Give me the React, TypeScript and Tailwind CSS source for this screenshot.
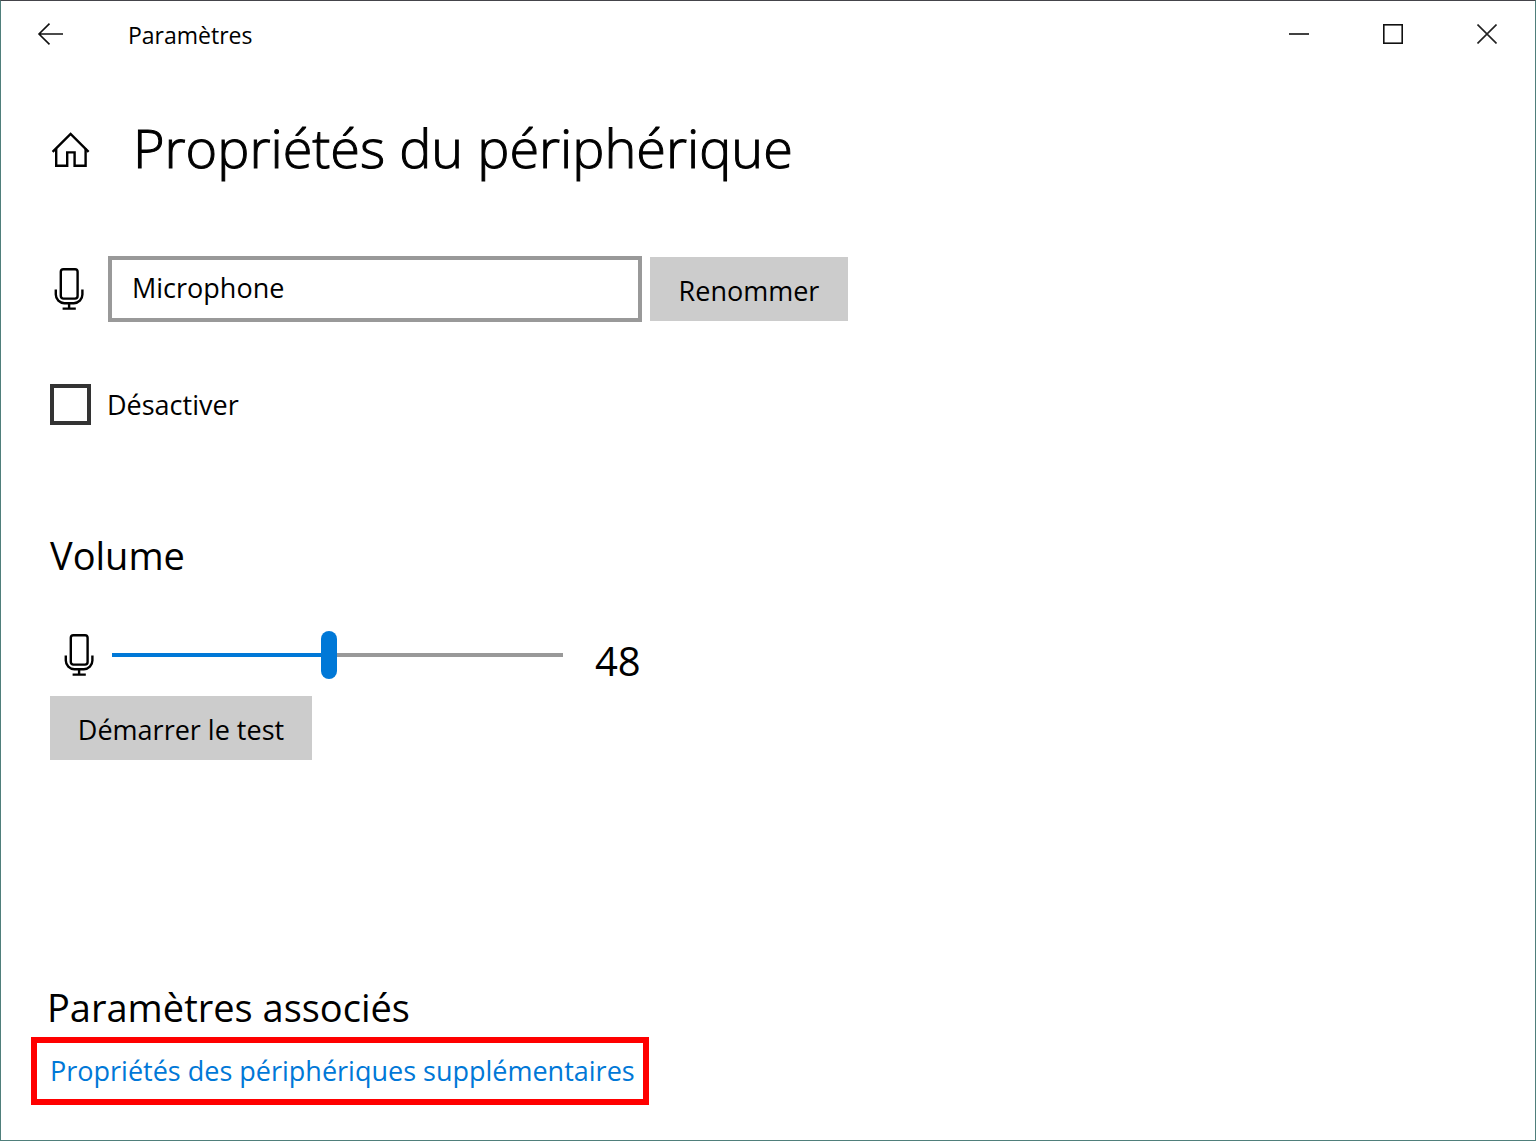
import { useState } from 'react'

const captionButton = 'flex h-[66px] w-[94px] items-center justify-center hover:bg-gray-200'

function MicIcon() {
  return (
    <svg width="30" height="44" viewBox="0 0 30 44" fill="none" stroke="#000" strokeWidth="2.4" aria-hidden="true">
      <rect x="6.8" y="2.2" width="16.8" height="29.4" rx="2.6" />
      <path d="M1.8 22.4v5.2a8.6 8.6 0 0 0 8.6 8.6h9.4a8.6 8.6 0 0 0 8.6-8.6v-5.2" />
      <path d="M15.1 36.2v5.4M8.6 41.6h13.2" />
    </svg>
  )
}

function TitleBar() {
  return (
    <header className="flex h-[66px] items-center">
      <button type="button" aria-label="Retour" className="flex h-full w-[98px] items-center justify-center">
        <svg width="26" height="22" viewBox="0 0 26 22" fill="none" stroke="#111" strokeWidth="1.6">
          <path d="M26 11H2M12.5 0.6L2 11L12.5 21.4" />
        </svg>
      </button>
      <span className="ml-[29px] pt-px text-[23px] leading-8">Paramètres</span>
      <div className="mr-px ml-auto flex">
        <button type="button" aria-label="Réduire" className={captionButton}>
          <svg width="20" height="20" viewBox="0 0 20 20" stroke="#111" strokeWidth="1.6">
            <path d="M0 10h20" />
          </svg>
        </button>
        <button type="button" aria-label="Agrandir" className={captionButton}>
          <svg width="20" height="20" viewBox="0 0 20 20" fill="none" stroke="#111" strokeWidth="1.6">
            <rect x="0.8" y="0.8" width="18.4" height="18.4" />
          </svg>
        </button>
        <button type="button" aria-label="Fermer" className={captionButton}>
          <svg width="20" height="20" viewBox="0 0 20 20" stroke="#222" strokeWidth="1.6">
            <path d="M0.5 0.5l19 19M19.5 0.5l-19 19" />
          </svg>
        </button>
      </div>
    </header>
  )
}

export default function App() {
  const [name, setName] = useState('Microphone')
  const [disabled, setDisabled] = useState(false)
  const [volume, setVolume] = useState(48)

  return (
    <div className="min-h-screen border border-[#4f7f7b] border-t-[#44444a] bg-white font-['Open_Sans','Noto_Sans',sans-serif] text-[27px] leading-9 text-black">
      <TitleBar />

      <main className="px-[49px] pb-8">
        <div className="mt-12 flex h-16 items-center">
          <a href="#accueil" aria-label="Accueil" className="pt-1.5">
            <svg width="40" height="38" viewBox="0 0 40 38" fill="none" stroke="#000" strokeWidth="2.4">
              <path d="M2.6 20.8L20.6 3L38.6 20.8" />
              <path d="M6.2 17.6V34.8H17.2V21.4H24.6V34.8H35.6V17.6" />
            </svg>
          </a>
          <h1 className="ml-[43px] text-[54px] leading-[64px] font-light whitespace-nowrap [-webkit-text-stroke:1px_#000]">
            Propriétés du périphérique
          </h1>
        </div>

        <div className="mt-[77px] flex items-center">
          <label htmlFor="device-name" aria-label="Nom du périphérique" className="ml-1">
            <MicIcon />
          </label>
          <input
            id="device-name"
            type="text"
            value={name}
            onChange={(e) => setName(e.target.value)}
            className="ml-6 h-[66px] w-[534px] border-4 border-[#999] px-5 pb-1 outline-none"
          />
          <button type="button" className="ml-2 h-16 w-[198px] bg-[#ccc] pt-1 whitespace-nowrap">
            Renommer
          </button>
        </div>

        <label className="mt-[62px] flex w-fit items-center gap-4">
          <input
            type="checkbox"
            checked={disabled}
            onChange={(e) => setDisabled(e.target.checked)}
            className="size-[41px] appearance-none border-4 border-[#333] checked:bg-[#0078d7]"
          />
          Désactiver
        </label>

        <section className="mt-[106px]">
          <h2 className="text-[38px] leading-[48px]">Volume</h2>
          <div className="mt-[52px] flex h-12 items-center">
            <label htmlFor="volume" aria-label="Volume" className="ml-[14px]">
              <MicIcon />
            </label>
            <input
              id="volume"
              type="range"
              min={0}
              max={100}
              value={volume}
              onChange={(e) => setVolume(Number(e.target.value))}
              className="ml-[18px] h-12 w-[451px] appearance-none bg-[length:100%_4px] bg-center bg-no-repeat [&::-webkit-slider-thumb]:h-12 [&::-webkit-slider-thumb]:w-4 [&::-webkit-slider-thumb]:appearance-none [&::-webkit-slider-thumb]:rounded-full [&::-webkit-slider-thumb]:bg-[#0078d7]"
              style={{ backgroundImage: `linear-gradient(to right, #0078d7 ${volume}%, #999 ${volume}%)` }}
            />
            <output htmlFor="volume" className="ml-8 pt-3 text-[40px] leading-[48px]">
              {volume}
            </output>
          </div>
          <button type="button" className="mt-[17px] h-16 w-[262px] bg-[#ccc] pt-1 whitespace-nowrap">
            Démarrer le test
          </button>
        </section>

        <section className="-mx-[19px] mt-[223px]">
          <h2 className="pl-4 text-[38px] leading-[48px]">Paramètres associés</h2>
          <div className="mt-[6px] flex h-[68px] w-[618px] items-center border-[6px] border-[#f00] pl-[13px]">
            <a href="#proprietes" className="whitespace-nowrap text-[#0078d7]">
              Propriétés des périphériques supplémentaires
            </a>
          </div>
        </section>
      </main>
    </div>
  )
}
